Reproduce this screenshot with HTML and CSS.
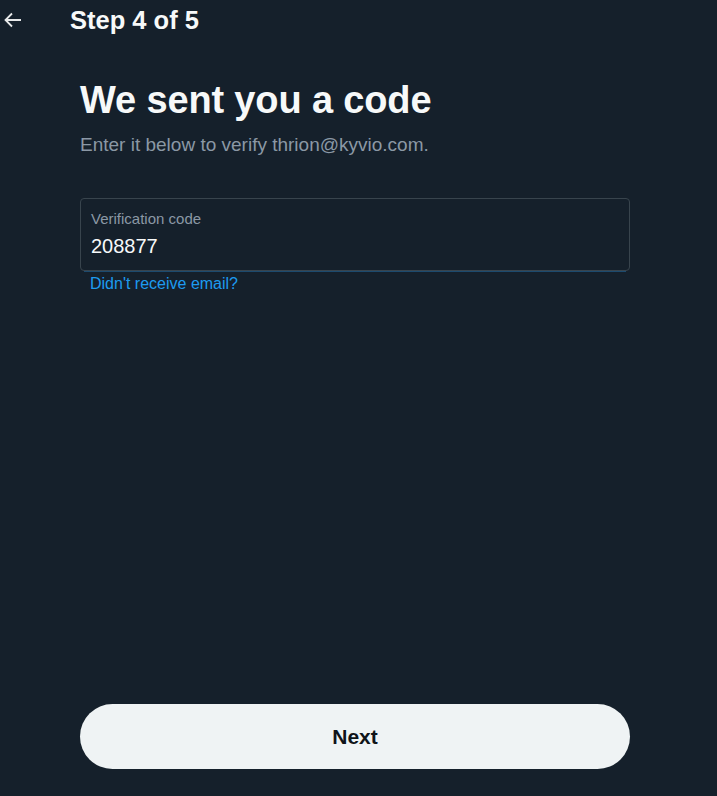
FILE: index.html
```html
<!DOCTYPE html>
<html>
<head>
<meta charset="utf-8">
<link rel="stylesheet" href="styles.css">
</head>
<body>
<div class="page">
  <header class="topbar">
    <button class="back" aria-label="Back">
      <svg width="20" height="20" viewBox="0 0 20 20"><path d="M18 10H3M9 3.5L2.5 10 9 16.5" fill="none" stroke="#e7e9ea" stroke-width="1.8"/></svg>
    </button>
    <div class="step">Step 4 of 5</div>
  </header>
  <main class="content">
    <h1 class="title">We sent you a code</h1>
    <p class="subtitle">Enter it below to verify thrion@kyvio.com.</p>
    <div class="field">
      <div class="label">Verification code</div>
      <div class="value">208877</div>
    </div>
    <div class="underline"></div>
    <a class="link" href="#">Didn't receive email?</a>
  </main>
  <footer class="actions">
    <button class="next">Next</button>
  </footer>
</div>
</body>
</html>
```
FILE: styles.css
```css
html, body {
  margin: 0;
  padding: 0;
  background: #15202b;
  height: 100%;
}
body {
  font-family: "Liberation Sans", Arial, sans-serif;
  color: #f7f9f9;
}
.page {
  height: 796px;
  display: flex;
  flex-direction: column;
}
.topbar {
  display: flex;
  align-items: center;
  height: 40px;
}
.back {
  background: none;
  border: 0;
  padding: 0;
  margin: 0 0 0 3px;
  width: 20px;
  height: 20px;
  display: flex;
  align-items: center;
  justify-content: center;
}
.step {
  margin-left: 47px;
  font-size: 25.5px;
  font-weight: bold;
  color: #f7f9f9;
}
.content {
  padding: 0 87px 0 80px;
  flex: 1;
}
.title {
  margin: 40px 0 0;
  font-size: 38px;
  line-height: 40px;
  font-weight: bold;
  color: #f7f9f9;
  letter-spacing: -0.15px;
}
.subtitle {
  margin: 13px 0 0;
  font-size: 19px;
  line-height: 24px;
  color: #8b98a5;
}
.field {
  margin-top: 41px;
  height: 73px;
  border: 1px solid #38444d;
  border-radius: 4px;
  box-sizing: border-box;
  padding: 11px 10px 0;
}
.label {
  font-size: 15px;
  line-height: 18px;
  color: #8b98a5;
}
.value {
  margin-top: 6px;
  font-size: 20px;
  line-height: 24px;
  color: #f7f9f9;
}
.underline {
  height: 1px;
  margin: 0 4px 0 4px;
  background: #1c4a6e;
}
.link {
  display: block;
  margin: 3px 0 0 10px;
  font-size: 16px;
  line-height: 18px;
  color: #1d9bf0;
  text-decoration: none;
}
.actions {
  padding: 0 87px 27px 80px;
}
.next {
  width: 100%;
  height: 65px;
  border: 0;
  border-radius: 33px;
  background: #eff3f4;
  color: #0f1419;
  font-family: "Liberation Sans", Arial, sans-serif;
  font-size: 21px;
  font-weight: bold;
}
```
